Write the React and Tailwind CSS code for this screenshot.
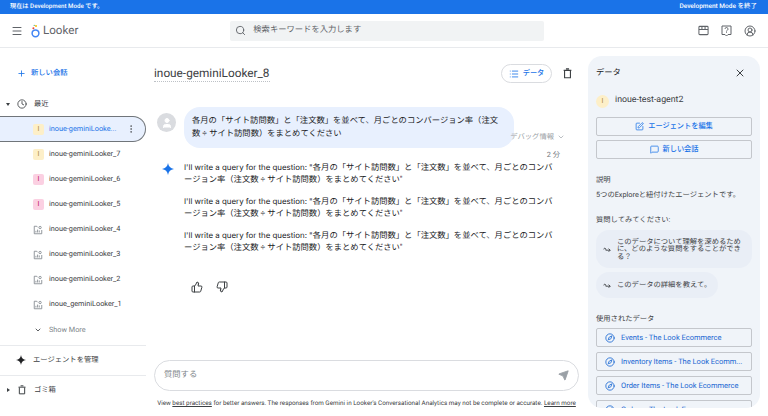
import { Menu, Search, Plus, Clock, MoreVertical, ChevronDown, Send, ThumbsUp, ThumbsDown, X, List, SquarePen, MessageSquare, Compass, CircleUserRound, User } from 'lucide-react'

const PROMPT = '各月の「サイト訪問数」と「注文数」を並べて、月ごとのコンバージョン率（注文数 ÷ サイト訪問数）をまとめてください'

function Sparkle({ size = 12, className }) {
  return (
    <svg width={size} height={size} viewBox="0 0 24 24" className={className} fill="currentColor">
      <path d="M12 0C12.8 6.8 17.2 11.2 24 12 17.2 12.8 12.8 17.2 12 24 11.2 17.2 6.8 12.8 0 12 6.8 11.2 11.2 6.8 12 0Z" />
    </svg>
  )
}

function LookerLogo() {
  return (
    <svg width="9" height="14" viewBox="0 0 9 14" fill="none">
      <circle cx="4.5" cy="9.3" r="3.4" stroke="#4285f4" strokeWidth="1.5" />
      <circle cx="2.4" cy="4.3" r="1" fill="#ea4335" />
      <circle cx="5" cy="2" r="1" fill="#fbbc04" />
      <circle cx="3.2" cy="1.3" r="0.6" fill="#34a853" />
    </svg>
  )
}

function TrashIcon({ size = 10, className }) {
  return (
    <svg width={size} height={size} viewBox="0 0 12 12" fill="none" stroke="currentColor" strokeWidth="1.2" className={className}>
      <path d="M2.8 3v7.6h6.4V3M1.8 2.6h8.4M4.3 1h3.4" />
    </svg>
  )
}

function ShopIcon() {
  return (
    <svg width="11" height="11" viewBox="0 0 12 12" fill="none" stroke="currentColor" strokeWidth="1.1">
      <rect x="1" y="1.5" width="10" height="9" rx="1" />
      <path d="M1 5h10M4.3 1.5V5M7.7 1.5V5" />
    </svg>
  )
}

function HelpIcon() {
  return (
    <svg width="11" height="12" viewBox="0 0 11 12" fill="none" stroke="currentColor" strokeWidth="1">
      <path d="M1 1h9v8.5H7L5.5 11 4 9.5H1z" />
      <path d="M4 4a1.5 1.5 0 1 1 2.3 1.3c-.6.4-.8.6-.8 1.2M5.5 7.3v.7" />
    </svg>
  )
}

function HookArrow() {
  return (
    <svg width="8" height="8" viewBox="0 0 10 10" fill="none" stroke="#3c4043" strokeWidth="1.1" className="shrink-0">
      <path d="M1 5.5C1 3.5 3.5 3.5 3.5 5.5V6.5H9M7 4.5l2 2-2 2" />
    </svg>
  )
}

function ExploreIcon() {
  return (
    <svg width="10" height="10" viewBox="0 0 12 12" fill="none" stroke="#80868b" strokeWidth="1">
      <path d="M1.5 1.5v9h9V6M1.5 1.5h3l1 1.2" />
      <path d="M3.5 9V7M5.5 9V5.5M7.5 9V6.5" />
      <circle cx="8.5" cy="3" r="1.4" />
    </svg>
  )
}

function Badge({ tone }) {
  const cls = tone === 'pink' ? 'bg-[#fbd0e2] text-[#c2185b]' : 'bg-[#fdefc8] text-[#a8873a]'
  return <span className={`w-[11px] h-[11px] rounded-[2px] flex items-center justify-center text-[7px] ${cls}`}>I</span>
}

function ChatRow({ name, icon }) {
  return (
    <div className="h-[25px] flex items-center pl-[33px]">
      <span className="w-[16px] flex items-center">{icon === 'explore' ? <ExploreIcon /> : <Badge tone={icon} />}</span>
      <span className="text-[7.3px] text-[#3c4043]">{name}</span>
    </div>
  )
}

function Sidebar() {
  return (
    <aside className="w-[146px] shrink-0 flex flex-col">
      <div className="h-[24px] mt-[13px] flex items-center pl-[17px] gap-[5px] text-[#1a73e8]">
        <Plus size={9} strokeWidth={2.2} />
        <span className="text-[7.3px] font-medium">新しい会話</span>
      </div>
      <div className="h-[20px] mt-[9px] flex items-center pl-[6px] text-[#3c4043]">
        <span className="w-0 h-0 border-x-[2.5px] border-x-transparent border-t-[3px] border-t-[#3c4043] mr-[7px]" />
        <Clock size={10} />
        <span className="text-[7.3px] ml-[7px]">最近</span>
      </div>
      <div className="h-[26px] mt-[2px] flex items-center pl-[33px] pr-[9px] bg-[#e8f0fe] border border-l-0 border-[#70757a] rounded-r-[13px]">
        <span className="w-[16px] flex items-center"><Badge tone="yellow" /></span>
        <span className="text-[7.3px] text-[#1a73e8] flex-1 whitespace-nowrap">inoue-geminiLooke...</span>
        <MoreVertical size={10} className="text-[#5f6368]" />
      </div>
      <ChatRow name="inoue-geminiLooker_7" icon="yellow" />
      <ChatRow name="inoue-geminiLooker_6" icon="pink" />
      <ChatRow name="inoue-geminiLooker_5" icon="pink" />
      <ChatRow name="inoue-geminiLooker_4" icon="explore" />
      <ChatRow name="inoue-geminiLooker_3" icon="explore" />
      <ChatRow name="inoue-geminiLooker_2" icon="explore" />
      <ChatRow name="inoue_geminiLooker_1" icon="explore" />
      <div className="h-[28px] pb-[2px] flex items-center pl-[34px] gap-[7px]">
        <ChevronDown size={8} strokeWidth={2.5} className="text-[#3c4043]" />
        <span className="text-[7.3px] text-[#80868b]">Show More</span>
      </div>
      <div className="border-t border-[#e8eaed] h-[30px] pb-[1px] flex items-center pl-[16px] gap-[7px]">
        <Sparkle size={10} className="text-[#202124]" />
        <span className="text-[7.3px] text-[#3c4043]">エージェントを管理</span>
      </div>
      <div className="border-t border-[#e8eaed] h-[29px] flex items-center pl-[7px] text-[#3c4043]">
        <span className="w-0 h-0 border-y-[2.5px] border-y-transparent border-l-[3px] border-l-[#3c4043] mr-[7px]" />
        <TrashIcon />
        <span className="text-[7.3px] ml-[7px]">ゴミ箱</span>
      </div>
    </aside>
  )
}

function Reply() {
  return (
    <p className="text-[8.3px] leading-[12px] text-[#202124]">
      <span className="text-[7.9px] font-['Inter','Noto_Sans_CJK_JP',sans-serif]">I'll write a query for the question: "</span>{`${PROMPT}"`}
    </p>
  )
}

function Chat() {
  return (
    <main className="w-[425px] ml-[8px] shrink-0 flex flex-col">
      <div className="h-[19px] mt-[16px] flex items-center">
        <h1 className="text-[11.8px] text-[#3c4043] border-b border-dotted border-[#bdc1c6] leading-[15px]">inoue-geminiLooker_8</h1>
        <button className="ml-auto w-[51px] h-[19px] rounded-full border border-[#dadce0] flex items-center justify-center gap-[4px] text-[#1a73e8]">
          <List size={10} />
          <span className="text-[7.2px] font-medium">データ</span>
        </button>
        <TrashIcon size={11} className="ml-[10px] mr-[6px] text-[#3c4043]" />
      </div>
      <div className="flex mt-[24px] items-center">
        <span className="w-[19px] h-[19px] rounded-full bg-[#dadce0] flex items-center justify-center mt-[-10px] ml-[3px]">
          <User size={12} fill="white" stroke="white" />
        </span>
        <p className="w-[330px] h-[41px] ml-[8px] px-[8px] rounded-[16px] bg-[#e8f0fe] flex items-center text-[8.3px] leading-[13px] text-[#202124]">{PROMPT}</p>
      </div>
      <div className="flex justify-end items-center gap-[3px] mt-[-16px] pr-[14px] text-[7.3px] leading-[10px] text-[#9aa0a6]">
        デバッグ情報 <ChevronDown size={8} />
      </div>
      <div className="text-right pr-[19px] mt-[8px] text-[7.3px] leading-[10px] text-[#70757a]">2 分</div>
      <div className="flex mt-[1px] pr-[24px]">
        <Sparkle size={12} className="text-[#1a73e8] mt-[2px] ml-[8px] mr-[10px] shrink-0" />
        <div className="flex flex-col gap-[9px]">
          <Reply />
          <Reply />
          <Reply />
        </div>
      </div>
      <div className="flex gap-[13px] mt-[27px] ml-[37px] text-[#3c4043]">
        <ThumbsUp size={12} />
        <ThumbsDown size={12} />
      </div>
      <div className="mt-auto h-[31px] rounded-full border border-[#dadce0] flex items-center px-[9px] justify-between">
        <span className="text-[8.3px] text-[#80868b]">質問する</span>
        <Send size={11} fill="#9aa0a6" className="text-[#9aa0a6]" />
      </div>
      <p className="mt-[7px] mb-[8px] text-center text-[6.3px] leading-[10px] text-[#3c4043] whitespace-nowrap">
        View <span className="underline">best practices</span> for better answers. The responses from Gemini in Looker's Conversational Analytics may not be complete or accurate. <span className="underline">Learn more</span>
      </p>
    </main>
  )
}

function ActionButton({ icon: Icon, children }) {
  return (
    <button className="h-[19px] border border-[#c4c7cc] rounded-[2px] flex items-center justify-center gap-[4px] text-[#1a73e8]">
      <Icon size={9} />
      <span className="text-[7.2px] font-medium">{children}</span>
    </button>
  )
}

function Source({ children }) {
  return (
    <div className="h-[19px] shrink-0 border border-[#c4c7cc] rounded-[2px] flex items-center pl-[8px] gap-[6px] text-[#1967d2]">
      <Compass size={10} className="shrink-0" />
      <span className="text-[7.5px] whitespace-nowrap">{children}</span>
    </div>
  )
}

function DataPanel() {
  return (
    <section className="w-[172px] h-[352px] mt-[8px] ml-[9px] shrink-0 rounded-[14px] bg-[#f0f4f9] overflow-hidden px-[8px]">
      <div className="flex items-center justify-between h-[18px] mt-[8px]">
        <h2 className="text-[8.3px] text-[#202124]">データ</h2>
        <X size={12} className="text-[#3c4043] mr-[6px]" />
      </div>
      <div className="flex items-center gap-[6px] mt-[12px] h-[14px]">
        <span className="w-[13px] h-[13px] rounded-full bg-[#fdefc8] text-[#a8873a] text-[7px] flex items-center justify-center">I</span>
        <span className="text-[8.8px] text-[#3c4043]">inoue-test-agent2</span>
      </div>
      <div className="flex flex-col gap-[4px] mt-[9px]">
        <ActionButton icon={SquarePen}>エージェントを編集</ActionButton>
        <ActionButton icon={MessageSquare}>新しい会話</ActionButton>
      </div>
      <h3 className="text-[7.3px] leading-[12px] text-[#3c4043] mt-[15px]">説明</h3>
      <p className="text-[7.3px] leading-[12px] text-[#3c4043] mt-[3px]">5つのExploreと紐付けたエージェントです。</p>
      <h3 className="text-[7.3px] leading-[12px] text-[#3c4043] mt-[13px]">質問してみてください:</h3>
      <div className="mt-[4px] flex items-center h-[38px] rounded-[13px] bg-[#e9eef6] pl-[7px] gap-[6px]">
        <HookArrow />
        <span className="text-[7.3px] leading-[7.5px] text-[#3c4043] whitespace-nowrap">このデータについて理解を深めるため<br />に、どのような質問をすることができ<br />る？</span>
      </div>
      <div className="mt-[4px] w-[122px] flex items-center h-[26px] rounded-[13px] bg-[#e9eef6] pl-[7px] gap-[6px]">
        <HookArrow />
        <span className="text-[7.3px] whitespace-nowrap text-[#3c4043]">このデータの詳細を教えて。</span>
      </div>
      <h3 className="text-[7.3px] leading-[12px] text-[#3c4043] mt-[15px]">使用されたデータ</h3>
      <div className="flex flex-col gap-[5px] mt-[3px]">
        <Source>Events - The Look Ecommerce</Source>
        <Source>Inventory Items - The Look Ecomm...</Source>
        <Source>Order Items - The Look Ecommerce</Source>
        <Source>Orders - The Look Ecommerce</Source>
      </div>
    </section>
  )
}

export default function App() {
  return (
    <div className="w-[768px] h-[416px] overflow-hidden bg-white flex flex-col opacity-[0.999] [text-rendering:geometricPrecision] font-['Roboto','Noto_Sans_CJK_JP',sans-serif]">
      <div className="h-[14px] shrink-0 bg-[#1a73e8] text-white font-medium flex items-center justify-between pl-[10px] pr-[11px]">
        <span className="text-[6.2px]">現在は Development Mode です。</span>
        <span className="text-[6.5px]">Development Mode を終了</span>
      </div>
      <header className="h-[34px] shrink-0 border-b border-[#e8eaed] flex items-center">
        <Menu size={12} className="ml-[11px] text-[#5f6368]" />
        <span className="ml-[8px] flex items-center"><LookerLogo /></span>
        <span className="ml-[3px] text-[11.6px] text-[#5f6368]">Looker</span>
        <div className="ml-[152px] w-[314px] h-[20px] bg-[#f1f3f4] rounded-[2px] flex items-center pl-[5px] gap-[7px]">
          <Search size={11} className="text-[#5f6368]" />
          <span className="text-[8.3px] text-[#5f6368]">検索キーワードを入力します</span>
        </div>
        <div className="ml-auto mr-[12px] flex items-center gap-[12px] text-[#5f6368]">
          <ShopIcon />
          <HelpIcon />
          <CircleUserRound size={12} />
        </div>
      </header>
      <div className="flex flex-1 min-h-0">
        <Sidebar />
        <Chat />
        <DataPanel />
      </div>
    </div>
  )
}
